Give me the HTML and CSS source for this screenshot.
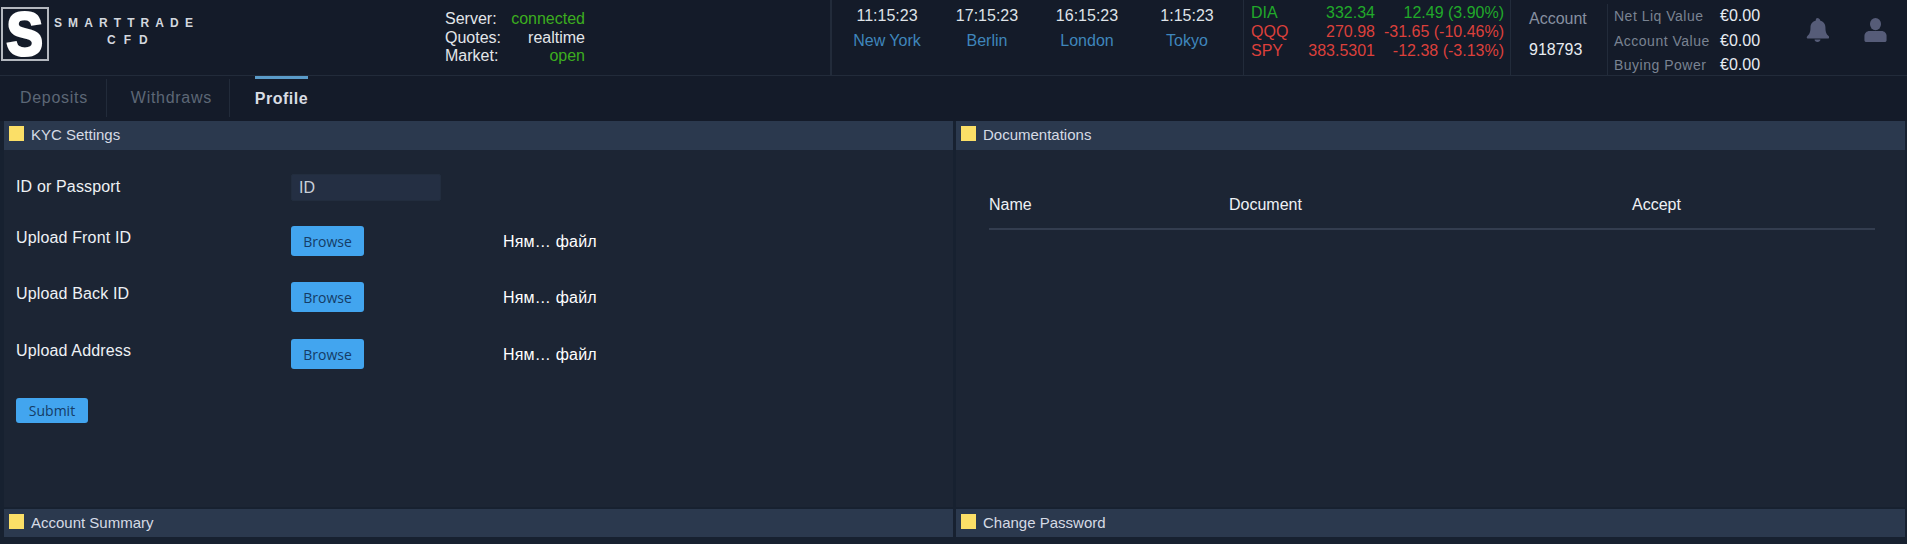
FILE: index.html
```html
<!DOCTYPE html>
<html lang="en">
<head>
<meta charset="utf-8">
<title>SmartTrade CFD</title>
<link rel="stylesheet" href="styles.css">
</head>
<body>
<header class="topbar">
  <div class="brand">
    <div class="logo-box"><span class="logo-s">S</span></div>
    <div class="logo-text">
      <div class="logo-name">SMARTTRADE</div>
      <div class="logo-sub">CFD</div>
    </div>
  </div>
  <div class="status">
    <span>Server:</span><span class="val green">connected</span>
    <span>Quotes:</span><span class="val">realtime</span>
    <span>Market:</span><span class="val green">open</span>
  </div>
  <div class="clocks">
    <div class="clock"><div>11:15:23</div><div class="city">New York</div></div>
    <div class="clock"><div>17:15:23</div><div class="city">Berlin</div></div>
    <div class="clock"><div>16:15:23</div><div class="city">London</div></div>
    <div class="clock"><div>1:15:23</div><div class="city">Tokyo</div></div>
  </div>
  <div class="ticker">
    <span class="green2">DIA</span><span class="num green2">332.34</span><span class="num green2">12.49 (3.90%)</span>
    <span class="red">QQQ</span><span class="num red">270.98</span><span class="num red">-31.65 (-10.46%)</span>
    <span class="red">SPY</span><span class="num red">383.5301</span><span class="num red">-12.38 (-3.13%)</span>
  </div>
  <div class="account">
    <div class="account-label">Account</div>
    <div class="account-id">918793</div>
  </div>
  <div class="balances">
    <span class="bal-label">Net Liq Value</span><span>€0.00</span>
    <span class="bal-label">Account Value</span><span>€0.00</span>
    <span class="bal-label">Buying Power</span><span>€0.00</span>
  </div>
  <div class="icons">
    <svg class="icon" viewBox="0 0 24 26" aria-hidden="true"><path d="M12 0c-1.100 0-1.800.8-1.800 1.800v.9C6.600 3.600 4.400 6.600 4.400 10.200c0 5.400-1.400 7.400-3.300 9.200-.5.5-.8 1-.8 1.500 0 .8.600 1.400 1.500 1.400h21.400c.9 0 1.500-.6 1.500-1.400 0-.5-.3-1-.8-1.500-1.900-1.800-3.300-3.800-3.300-9.200 0-3.600-2.200-6.600-5.800-7.500v-.9C13.800.8 13.100 0 12 0z"/><path d="M8.800 23.400h6.400c0 1.500-1.400 2.600-3.200 2.600s-3.200-1.100-3.200-2.600z"/></svg>
    <svg class="icon" viewBox="0 0 24 26" aria-hidden="true"><ellipse cx="12" cy="6.600" rx="6" ry="6.600"/><path d="M5.500 14h13c3.100 0 5.500 2.400 5.500 5.500v4.500c0 1.100-.9 2-2 2H2c-1.100 0-2-.9-2-2v-4.500C0 16.400 2.400 14 5.500 14z"/></svg>
  </div>
</header>

<nav class="tabs">
  <a class="tab tab-deposits">Deposits</a>
  <a class="tab tab-withdraws">Withdraws</a>
  <a class="tab tab-active">Profile</a>
</nav>

<main class="panels">
  <section class="panel">
    <h2 class="panel-head"><span class="marker"></span>KYC Settings</h2>
    <div class="panel-body kyc">
      <div class="row row-id">
        <label class="field-label">ID or Passport</label>
        <input class="text-input" value="ID">
      </div>
      <div class="row row-front">
        <label class="field-label">Upload Front ID</label>
        <button class="btn btn-browse">Browse</button>
        <span class="file-name">Ням… файл</span>
      </div>
      <div class="row row-back">
        <label class="field-label">Upload Back ID</label>
        <button class="btn btn-browse">Browse</button>
        <span class="file-name">Ням… файл</span>
      </div>
      <div class="row row-address">
        <label class="field-label">Upload Address</label>
        <button class="btn btn-browse">Browse</button>
        <span class="file-name">Ням… файл</span>
      </div>
      <button class="btn btn-submit">Submit</button>
    </div>
  </section>
  <section class="panel">
    <h2 class="panel-head"><span class="marker"></span>Documentations</h2>
    <div class="panel-body docs">
      <div class="docs-head">
        <span class="col-name">Name</span>
        <span class="col-doc">Document</span>
        <span>Accept</span>
      </div>
    </div>
  </section>
  <section class="panel panel-collapsed">
    <h2 class="panel-head"><span class="marker"></span>Account Summary</h2>
  </section>
  <section class="panel panel-collapsed">
    <h2 class="panel-head"><span class="marker"></span>Change Password</h2>
  </section>
</main>
</body>
</html>
```

FILE: styles.css
```css
* { box-sizing: border-box; }

html, body {
  margin: 0;
  height: 544px;
  overflow: hidden;
}

body {
  background: #141b29;
  color: #e8ecf2;
  font-family: "Liberation Sans", Arial, sans-serif;
  font-size: 16px;
}

/* Top bar */
.topbar {
  display: flex;
  height: 76px;
  border-bottom: 1px solid #222b3a;
}

.brand {
  flex: 0 0 445px;
  display: flex;
  align-items: flex-start;
  padding: 7px 0 0 1px;
}

.logo-box {
  width: 48px;
  height: 54px;
  border: 2px solid #b4b8bf;
  display: flex;
  align-items: center;
  justify-content: center;
}

.logo-s {
  font-weight: 700;
  font-size: 62px;
  line-height: 50px;
  color: #fff;
  -webkit-text-stroke: 3px #fff;
  transform: scaleX(0.88);
}

.logo-text {
  margin-left: 5px;
  padding-top: 10px;
  font-weight: 700;
  font-size: 12px;
  color: #d3d7de;
}

.logo-name {
  letter-spacing: 6.100px;
  line-height: 13px;
  white-space: nowrap;
}

.logo-sub {
  letter-spacing: 8px;
  line-height: 13px;
  margin: 4px 0 0 53px;
}

.status {
  flex: 0 0 385px;
  display: grid;
  grid-template-columns: 60px 80px;
  grid-auto-rows: 18.500px;
  align-content: start;
  padding-top: 10px;
  line-height: 18px;
  color: #e3e6ea;
}

.val { text-align: right; white-space: nowrap; }
.green { color: #3cae1f; }
.green2 { color: #21a92a; }
.red { color: #dc403b; }

.clocks {
  flex: 0 0 413px;
  display: flex;
  padding: 7px 0 0 5px;
  border-left: 2px solid #222b3a;
  color: #dfe3e8;
}

.clock {
  flex: 0 0 100px;
  text-align: center;
  line-height: 18px;
}

.city {
  margin-top: 7px;
  color: #3f86bc;
}

.ticker {
  flex: 0 0 267px;
  display: grid;
  grid-template-columns: 48px 76px 129px;
  grid-auto-rows: 19px;
  align-content: start;
  padding: 3px 0 0 7px;
  line-height: 19px;
  border-left: 1px solid #222b3a;
  white-space: nowrap;
}

.num { text-align: right; }

.account {
  flex: 0 0 97px;
  padding: 10px 0 0 18px;
  border-left: 1px solid #222b3a;
}

.account-label {
  color: #8790a0;
  line-height: 18px;
}

.account-id {
  margin-top: 13px;
  line-height: 18px;
  color: #e8ecf2;
}

.balances {
  flex: 0 0 183px;
  display: grid;
  grid-template-columns: 106px auto;
  grid-auto-rows: 24.500px;
  align-content: start;
  align-items: center;
  height: 71px;
  margin-top: 4px;
  padding-left: 6px;
  border-left: 1px solid #222b3a;
  white-space: nowrap;
}

.bal-label {
  color: #7a8392;
  font-size: 14px;
  letter-spacing: 0.500px;
}

.icons {
  flex: 1;
  display: flex;
  padding: 18px 0 0 16px;
  gap: 35px;
}

.icon {
  width: 23px;
  height: 24px;
  fill: #565c78;
}

/* Tabs */
.tabs {
  display: flex;
  height: 45px;
  align-items: flex-start;
  letter-spacing: 0.700px;
}

.tab {
  display: flex;
  align-items: center;
  color: #5d6776;
  height: 38px;
  margin-top: 3px;
}

.tab-deposits {
  margin-left: 20px;
  padding-right: 18px;
  border-right: 1px solid #222b3a;
}

.tab-withdraws {
  padding: 0 17px 0 24px;
  border-right: 1px solid #222b3a;
}

.tab-active {
  margin: 0 0 0 25px;
  height: 41px;
  padding-top: 1px;
  border-top: 3px solid #5a9bc9;
  color: #d9dde3;
  font-weight: 700;
  letter-spacing: 0.500px;
}

.tab-active { margin-top: 0; }

/* Panels */
.panels {
  display: grid;
  grid-template-columns: 1fr 1fr;
  grid-template-rows: 386px 28px;
  gap: 2px 3px;
  padding: 0 2px 0 4px;
  height: 423px;
  background: #172130;
}

.panel {
  display: flex;
  flex-direction: column;
  background: #1c2534;
  min-width: 0;
}

.panel-head {
  flex: 0 0 29px;
  display: flex;
  align-items: flex-start;
  margin: 0;
  padding: 5px 0 0 5px;
  background: #2b394e;
  color: #d6dbe5;
  font-size: 15px;
  font-weight: 400;
  line-height: 17px;
}

.marker {
  flex: 0 0 15px;
  height: 15px;
  margin-right: 7px;
  background: #fbdf67;
}

.panel-collapsed .panel-head { flex-basis: 28px; }

.panel-body { flex: 1; }

.kyc { padding: 24px 0 0 12px; }

.row {
  display: flex;
  align-items: flex-start;
  color: #eef1f5;
}

.row-front { margin-top: 25px; }
.row-back { margin-top: 25px; }
.row-address { margin-top: 26px; }

.field-label {
  flex: 0 0 275px;
  line-height: 24px;
  letter-spacing: 0.150px;
}

.row-id .field-label { line-height: 26px; }

.text-input {
  width: 150px;
  height: 27px;
  padding: 0 7px;
  border: 1px solid #222d3e;
  border-radius: 2px;
  background: #242f43;
  color: #c9cfd9;
  font: 16px "Liberation Sans", Arial, sans-serif;
}

.btn {
  padding: 0;
  border: 0;
  border-radius: 3px;
  background: #42a5ef;
  color: #153c66;
  font-family: "Open Sans", Arial, sans-serif;
  font-size: 14px;
}

.btn-browse {
  flex: 0 0 73px;
  height: 30px;
}

.btn-submit {
  display: block;
  width: 72px;
  height: 25px;
  margin-top: 28px;
}

.file-name {
  margin-left: 139px;
  line-height: 31px;
  color: #fff;
  letter-spacing: 0.200px;
}

.docs { padding: 45px 30px 0 33px; }

.docs-head {
  display: flex;
  height: 22px;
  line-height: 20px;
  box-sizing: content-box;
  padding-bottom: 11px;
  border-bottom: 2px solid #333d4f;
  color: #eef1f5;
}

.col-name { flex: 0 0 240px; }
.col-doc { flex: 0 0 403px; }
```
